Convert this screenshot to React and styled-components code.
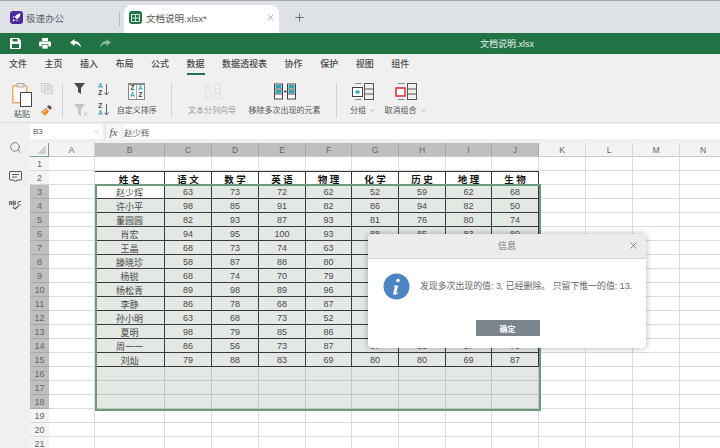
import React from 'react';
import styled, { createGlobalStyle } from 'styled-components';
import { Plus, X, Search, ChevronDown } from 'lucide-react';

const GlobalStyle = createGlobalStyle`
    html, body {
        margin: 0;
        padding: 0;
        background: #fff;
    }
    body {
        font-family: "Liberation Sans", "Noto Sans CJK SC", sans-serif;
    }
`;

const COLUMNS = [
    ['A', 46], ['B', 70], ['C', 47], ['D', 47], ['E', 47], ['F', 46], ['G', 47],
    ['H', 47], ['I', 46], ['J', 47], ['K', 47], ['L', 47], ['M', 47], ['N', 47],
];

const HEADERS = ['姓 名', '语 文', '数 学', '英 语', '物 理', '化 学', '历 史', '地 理', '生 物'];

// rows 7-13 are cut short: the rest of them sits behind the dialog
const STUDENTS = [
    ['赵少辉', 63, 73, 72, 62, 52, 59, 62, 68],
    ['许小平', 98, 85, 91, 82, 86, 94, 82, 50],
    ['董圆圆', 82, 93, 87, 93, 81, 76, 80, 74],
    ['肖宏', 94, 95, 100, 93, 88, 85, 83, 89],
    ['王晶', 68, 73, 74, 63],
    ['滕晓珍', 58, 87, 88, 80],
    ['杨锐', 68, 74, 70, 79],
    ['杨松青', 89, 98, 89, 96],
    ['李静', 86, 78, 68, 87],
    ['孙小明', 63, 68, 73, 52],
    ['夏明', 98, 79, 85, 86],
    ['周一一', 86, 56, 73, 87, 87, 83, 87, 70],
    ['刘灿', 79, 88, 83, 69, 80, 80, 69, 87],
];

const MENU = ['文件', '主页', '插入', '布局', '公式', '数据', '数据透视表', '协作', '保护', '视图', '组件'];

export default function App() {
    return <>
        <GlobalStyle />
        <Page>
            <TabStrip>
                <HomeTab>
                    <AppBadge color='#4b2a9e'><RocketIcon /></AppBadge>
                    极速办公
                </HomeTab>
                <TabDivider />
                <DocTab>
                    <AppBadge color='#217346'><SheetIcon /></AppBadge>
                    <DocName>文档说明.xlsx*</DocName>
                    <X size={9} color='#777' strokeWidth={1.6} />
                </DocTab>
                <NewTab><Plus size={13} color='#555' strokeWidth={1.5} /></NewTab>
            </TabStrip>

            <TitleBar>
                <QuickIcon><SaveIcon /></QuickIcon>
                <QuickIcon><PrintIcon /></QuickIcon>
                <QuickIcon><UndoIcon /></QuickIcon>
                <QuickIcon><RedoIcon /></QuickIcon>
                <DocTitle>文档说明.xlsx</DocTitle>
            </TitleBar>

            <MenuBar>
                {MENU.map(item => <MenuItem key={item} $active={item === '数据'}>{item}</MenuItem>)}
            </MenuBar>

            <Ribbon>
                <ClipboardGroup>
                    <PasteButton>
                        <PasteIcon />
                        <span>粘贴</span>
                    </PasteButton>
                    <SmallStack>
                        <CopyIcon />
                        <BrushIcon />
                    </SmallStack>
                </ClipboardGroup>
                <RibbonDivider />
                <SortGroup>
                    <SmallStack>
                        <FilterIcon />
                        <ClearFilterIcon />
                    </SmallStack>
                    <SmallStack>
                        <SortIcon top='A' bottom='Z' />
                        <SortIcon top='Z' bottom='A' />
                    </SmallStack>
                    <CustomSortButton>
                        <CustomSortIcon />
                        <Label>自定义排序</Label>
                    </CustomSortButton>
                </SortGroup>
                <RibbonDivider />
                <DataGroup>
                    <RibbonButton $width={50} $disabled>
                        <SplitIcon />
                        <Label>文本分列向导</Label>
                    </RibbonButton>
                    <RibbonButton $width={74}>
                        <RemoveDupIcon />
                        <Label>移除多次出现的元素</Label>
                    </RibbonButton>
                </DataGroup>
                <RibbonDivider />
                <OutlineGroup>
                    <RibbonButton $width={22}>
                        <GroupIcon color='#2aa6b8' />
                        <Label>分组<ChevronDown size={7} color='#888' /></Label>
                    </RibbonButton>
                    <RibbonButton $width={41}>
                        <GroupIcon color='#e8262a' hollow />
                        <Label>取消组合<ChevronDown size={7} color='#888' /></Label>
                    </RibbonButton>
                </OutlineGroup>
            </Ribbon>

            <Workspace>
                <SideRail>
                    <Search size={13} color='#666' strokeWidth={1.4} />
                    <CommentIcon />
                    <SpellIcon />
                </SideRail>
                <SheetArea>
                    <FormulaBar>
                        <NameBox>B3<ChevronDown size={7} color='#999' /></NameBox>
                        <FxBox>fx</FxBox>
                        <FormulaInput>赵少辉</FormulaInput>
                    </FormulaBar>
                    <Sheet />
                    <Dialog>
                        <DialogHead>
                            信息
                            <DialogClose><X size={11} color='#666' strokeWidth={1.6} /></DialogClose>
                        </DialogHead>
                        <DialogBody>
                            <InfoIcon />
                            <DialogText>发现多次出现的值: 3, 已经删除。 只留下惟一的值: 13.</DialogText>
                        </DialogBody>
                        <DialogFoot>
                            <OkButton>确定</OkButton>
                        </DialogFoot>
                    </Dialog>
                </SheetArea>
            </Workspace>
        </Page>
    </>
}

function Sheet() {
    const rows = Array.from({ length: 21 }, (_, i) => i + 1);
    return <Grid>
        <Corner><CornerMark /></Corner>
        {COLUMNS.map(([name]) => <ColHead key={name} $on={name >= 'B' && name <= 'J'}>{name}</ColHead>)}
        {rows.map(row => <SheetRow key={row} row={row} />)}
        <Selection />
    </Grid>
}

function SheetRow({ row }) {
    const selected = row >= 3 && row <= 18;
    return <>
        <RowHead $on={selected}>{row}</RowHead>
        {COLUMNS.map(([name], col) => {
            const inTable = col >= 1 && col <= 9;
            let text = '';
            if (row === 2 && inTable) text = HEADERS[col - 1];
            if (row >= 3 && row <= 15 && inTable) text = STUDENTS[row - 3][col - 1] ?? '';
            return <Cell
                key={name}
                $head={row === 2 && inTable}
                $ruled={row >= 2 && row <= 15 && inTable}
                $sel={selected && inTable && !(row === 3 && col === 1)}
            >{text}</Cell>;
        })}
    </>
}

/* icons */

function RocketIcon() {
    return <svg width='9' height='9' viewBox='0 0 10 10'>
        <path d='M9.5.5C6.5.7 4.3 2.3 3 4.5L5.5 7C7.7 5.7 9.3 3.5 9.5.5Z' fill='#fff' />
        <path d='M2.6 3.4 .5 4.5l1.7.8zM6.6 7.4 5.5 9.5l-.8-1.7zM1.8 6.3.5 9.5l3.2-1.3z' fill='#fff' />
    </svg>
}

function SheetIcon() {
    return <svg width='9' height='8' viewBox='0 0 9 8' fill='none' stroke='#fff' strokeWidth='.8'>
        <rect x='.5' y='.5' width='8' height='7' />
        <path d='M.5 4h8M4.5.5v7' />
    </svg>
}

function SaveIcon() {
    return <svg width='11' height='11' viewBox='0 0 11 11'>
        <path d='M0 1a1 1 0 0 1 1-1h7.5L11 2.5V10a1 1 0 0 1-1 1H1a1 1 0 0 1-1-1Z' fill='#fff' />
        <rect x='2.5' y='1' width='5' height='2.5' fill='#217346' />
        <rect x='2' y='6' width='7' height='4' fill='#217346' />
    </svg>
}

function PrintIcon() {
    return <svg width='12' height='11' viewBox='0 0 12 11'>
        <rect x='3' y='0' width='6' height='3' fill='#fff' />
        <rect x='0' y='3.5' width='12' height='5' rx='1' fill='#fff' />
        <rect x='3' y='6.5' width='6' height='4.5' fill='#fff' stroke='#217346' strokeWidth='.7' />
    </svg>
}

function UndoIcon() {
    return <svg width='11' height='9' viewBox='0 0 11 9'>
        <path d='M4.5 0 0 3.5 4.5 7V4.7C7 4.7 9 5.7 11 8.5 10.5 4.5 8 2.3 4.5 2.1Z' fill='#fff' />
    </svg>
}

function RedoIcon() {
    return <svg width='11' height='9' viewBox='0 0 11 9'>
        <path d='M6.5 0 11 3.5 6.5 7V4.7C4 4.7 2 5.7 0 8.5.5 4.5 3 2.3 6.5 2.1Z' fill='#8fb8a1' />
    </svg>
}

function PasteIcon() {
    return <svg width='20' height='24' viewBox='0 0 20 24'>
        <rect x='.75' y='2.75' width='14' height='17' rx='1' fill='#fff' stroke='#f4a860' strokeWidth='1.5' />
        <rect x='5' y='.5' width='7' height='3.5' fill='#e8e8e8' stroke='#999' strokeWidth='.8' />
        <rect x='8.5' y='9.5' width='11' height='14' fill='#fff' stroke='#444' />
    </svg>
}

function CopyIcon() {
    return <svg width='12' height='11' viewBox='0 0 12 11' fill='none' stroke='#cfcfcf'>
        <rect x='.5' y='.5' width='8' height='8' fill='#eee' />
        <rect x='3.5' y='2.5' width='8' height='8' fill='#e6e6e6' />
        <path d='M5 5h5M5 7h5' strokeWidth='.8' />
    </svg>
}

function BrushIcon() {
    return <svg width='11' height='11' viewBox='0 0 11 11'>
        <path d='M0 7 5 3l3 3.5-4 4.2Z' fill='#ee8a28' />
        <path d='M6 2 8 0l3 2.5-2 2.5Z' fill='#555' />
        <path d='M2 7.5 5 5' stroke='#fff' strokeWidth='.8' />
    </svg>
}

function FilterIcon() {
    return <svg width='12' height='11' viewBox='0 0 12 11'>
        <path d='M0 0h11L7 5v6L4 9V5Z' fill='#4a4a4a' />
    </svg>
}

function ClearFilterIcon() {
    return <svg width='14' height='12' viewBox='0 0 14 12'>
        <path d='M0 0h11L7 5v7L4 10V5Z' fill='#c4c4c4' />
        <path d='M10 8.5l3 3M13 8.5l-3 3' stroke='#bbb' strokeWidth='.8' />
    </svg>
}

function SortIcon({ top, bottom }) {
    const tint = letter => letter === 'A' ? '#38a6c6' : '#444';
    return <SortGlyph>
        <SortLetters>
            <SortLetter color={tint(top)}>{top}</SortLetter>
            <SortLetter color={tint(bottom)}>{bottom}</SortLetter>
        </SortLetters>
        <svg width='5' height='12' viewBox='0 0 5 12' fill='none' stroke='#666'>
            <path d='M2.5 0v11M.5 8.5l2 2.5 2-2.5' />
        </svg>
    </SortGlyph>
}

function CustomSortIcon() {
    return <CustomSortBox>
        <SortCol><SortLetter color='#444'>Z</SortLetter><SortLetter color='#38a6c6'>A</SortLetter></SortCol>
        <SortCol><SortLetter color='#38a6c6'>A</SortLetter><SortLetter color='#444'>Z</SortLetter></SortCol>
    </CustomSortBox>
}

function SplitIcon() {
    return <svg width='18' height='17' viewBox='0 0 19 17' fill='none'>
        <path d='M1 2h8M1 5h8M1 8h8' stroke='#d0d0d0' />
        <rect x='12.5' y='.5' width='6' height='15' stroke='#d0d0d0' />
        <path d='M12.5 5.5h6M12.5 10.5h6' stroke='#d0d0d0' />
        <path d='M9 11.5a3.5 3.5 0 1 1-6-1' stroke='#b5dde8' strokeWidth='1.2' />
    </svg>
}

function RemoveDupIcon() {
    const column = x => <>
        <rect x={x} y='.5' width='8' height='15' fill='#fff' stroke='#444' />
        <rect x={x + 1} y='1.5' width='6' height='3' fill='#2aa6b8' />
        <rect x={x + 1} y='6.5' width='6' height='3' fill='#2aa6b8' />
        <path d={`M${x} 5.5h8M${x} 10.5h8`} stroke='#444' />
    </>;
    return <svg width='22' height='17' viewBox='0 0 22 16'>
        {column(.5)}
        <path d='M10 8h2.5M11.2 6.7v2.6' stroke='#444' />
        {column(13.5)}
    </svg>
}

function GroupIcon({ color, hollow }) {
    return <svg width='22' height='17' viewBox='0 0 22 17' fill='none'>
        <rect x='12.5' y='.5' width='9' height='16' stroke='#555' strokeWidth='1' />
        <path d='M12.5 6h9M12.5 11h9' stroke='#555' />
        <path d='M3 .5h6.5M3 16.5h6.5' stroke='#888' />
        {hollow
            ? <rect x='1' y='5' width='9' height='8' fill='#fff' stroke={color} strokeWidth='1.5' />
            : <>
                <rect x='.5' y='4.5' width='10' height='9' fill='#fff' stroke='#444' />
                <rect x='3.5' y='7.5' width='4' height='3' fill={color} />
            </>}
    </svg>
}

function CommentIcon() {
    return <svg width='13' height='12' viewBox='0 0 13 12' fill='none' stroke='#555'>
        <path d='M1 .5h11a.5.5 0 0 1 .5.5v7.5a.5.5 0 0 1-.5.5H8L6.5 11 5 9H1a.5.5 0 0 1-.5-.5V1A.5.5 0 0 1 1 .5Z' />
        <path d='M3 3.5h7M3 6h5' strokeWidth='.9' />
    </svg>
}

function SpellIcon() {
    return <svg width='13' height='10' viewBox='0 0 13 10' fill='none' stroke='#555' strokeWidth='.9'>
        <path d='M.5 5V1.500h2V5M.5 3.200h2M4 5V1h1.500a1 1 0 0 1 0 2H4h1.700a1 1 0 0 1 0 2ZM12 1.500H10a1 1 0 0 0-1 1V4a1 1 0 0 0 1 1h2' />
        <path d='M4 7l2 2 3.500-3' strokeWidth='1.100' />
    </svg>
}

function CornerMark() {
    return <svg width='9' height='9' viewBox='0 0 9 9'>
        <path d='M9 0v9H0Z' fill='#cfcfcf' />
    </svg>
}

function InfoIcon() {
    return <svg width='27' height='27' viewBox='0 0 27 27'>
        <circle cx='13.5' cy='13.5' r='13' fill='#4a84c2' />
        <circle cx='15' cy='7.5' r='1.8' fill='#fff' />
        <path d='M11 12.5h4.3l-2 7.2c-.1.5.4.6 1.700-.4l.3.5c-1.500 1.600-2.700 2-3.800 2-1.200 0-1.400-.8-1.200-1.700l1.500-6.300-1.100-.5Z' fill='#fff' />
    </svg>
}

/* page */

const Page = styled.div`
    position: relative;
    width: 720px;
    height: 448px;
    overflow: hidden;
    display: flex;
    flex-direction: column;
    font-family: "Liberation Sans", "Noto Sans CJK SC", sans-serif;
    color: #444;
    background: #f0f0f0;
`;

const TabStrip = styled.div`
    display: flex;
    align-items: flex-end;
    height: 32px;
    padding-left: 10px;
    border-top: 1px solid #a4a6a8;
    background: #dee1e6;
    flex: none;
`;

const AppBadge = styled.span`
    display: inline-flex;
    align-items: center;
    justify-content: center;
    width: 13px;
    height: 13px;
    border-radius: 3px;
    background: ${props => props.color};
    flex: none;
`;

const HomeTab = styled.div`
    display: flex;
    align-items: center;
    gap: 3px;
    width: 109px;
    height: 28px;
    padding-bottom: 3px;
    box-sizing: border-box;
    font-size: 9.5px;
    color: #5d5f63;
`;

const TabDivider = styled.div`
    width: 1px;
    height: 15px;
    margin-bottom: 7px;
    background: #b9bcc1;
`;

const DocTab = styled.div`
    display: flex;
    align-items: center;
    gap: 4px;
    width: 155px;
    height: 28px;
    margin-left: 4px;
    padding: 0 4px 3px 5px;
    box-sizing: border-box;
    border-radius: 8px 8px 0 0;
    background: #fff;
`;

const DocName = styled.span`
    flex: 1;
    font-size: 9.5px;
    color: #555;
`;

const NewTab = styled.div`
    display: flex;
    align-items: center;
    justify-content: center;
    width: 41px;
    height: 28px;
    padding-bottom: 3px;
    box-sizing: border-box;
`;

const TitleBar = styled.div`
    display: flex;
    align-items: center;
    height: 21px;
    background: #217346;
    flex: none;
`;

const QuickIcon = styled.span`
    display: flex;
    align-items: center;
    justify-content: center;
    width: 30px;
    svg { display: block; }
`;

const DocTitle = styled.span`
    margin-left: 360px;
    font-size: 9px;
    color: #e6f0ea;
`;

const MenuBar = styled.div`
    display: flex;
    align-items: flex-start;
    gap: 17.5px;
    height: 24px;
    padding-left: 9px;
    flex: none;
`;

const MenuItem = styled.div`
    display: flex;
    align-items: center;
    height: 21px;
    box-sizing: border-box;
    font-size: 9px;
    font-weight: 500;
    color: #4a4a4a;
    border-bottom: 2px solid ${props => props.$active ? '#217346' : 'transparent'};
`;

const Ribbon = styled.div`
    display: flex;
    align-items: flex-start;
    height: 45px;
    padding-top: 5px;
    box-sizing: border-box;
    border-bottom: 1px solid #dedede;
    flex: none;
`;

const RibbonDivider = styled.div`
    width: 1px;
    height: 35px;
    background: #d2d2d2;
    flex: none;
`;

const ClipboardGroup = styled.div`
    display: flex;
    width: 62px;
    padding-left: 12px;
    gap: 9px;
    box-sizing: border-box;
`;

const PasteButton = styled.div`
    display: flex;
    flex-direction: column;
    align-items: center;
    gap: 1px;
    font-size: 8px;
    color: #555;
`;

const SmallStack = styled.div`
    display: flex;
    flex-direction: column;
    align-items: flex-start;
    justify-content: space-between;
    height: 33px;
`;

const SortGroup = styled.div`
    display: flex;
    width: 108px;
    padding-left: 11px;
    gap: 10px;
    box-sizing: border-box;
`;

const RibbonButton = styled.div`
    display: flex;
    flex-direction: column;
    align-items: center;
    gap: 5px;
    width: ${props => props.$width}px;
    opacity: ${props => props.$disabled ? 0.55 : 1};
    flex: none;
`;

const CustomSortButton = styled(RibbonButton)`
    width: 42px;
    margin-left: -3px;
`;

const Label = styled.div`
    display: flex;
    align-items: center;
    gap: 3px;
    height: 11px;
    font-size: 8px;
    line-height: 11px;
    white-space: nowrap;
    color: #555;
`;

const DataGroup = styled.div`
    display: flex;
    width: 164px;
    padding-left: 15px;
    gap: 10.5px;
    box-sizing: border-box;
`;

const OutlineGroup = styled.div`
    display: flex;
    padding-left: 15px;
    gap: 11px;
`;

const SortGlyph = styled.div`
    display: flex;
    align-items: center;
    gap: 1px;
`;

const SortLetters = styled.div`
    display: flex;
    flex-direction: column;
`;

const SortLetter = styled.span`
    font-size: 6.5px;
    line-height: 6.5px;
    font-weight: 700;
    text-align: center;
    color: ${props => props.color};
`;

const CustomSortBox = styled.div`
    display: grid;
    grid-template-columns: 1fr 1fr;
    width: 17px;
    height: 17px;
    box-sizing: border-box;
    border: 1px solid #888;
    border-top-width: 2px;
    background: #fff;
`;

const SortCol = styled.div`
    display: flex;
    flex-direction: column;
    justify-content: space-around;
    &:first-child { border-right: 1px solid #aaa; }
`;

const Workspace = styled.div`
    flex: 1;
    display: flex;
    min-height: 0;
`;

const SideRail = styled.div`
    display: flex;
    flex-direction: column;
    align-items: center;
    gap: 17px;
    width: 30px;
    padding-top: 18px;
    box-sizing: border-box;
    flex: none;
`;

const SheetArea = styled.div`
    position: relative;
    flex: 1;
    min-width: 0;
    display: flex;
    flex-direction: column;
    overflow: hidden;
`;

const FormulaBar = styled.div`
    display: flex;
    gap: 2px;
    height: 15px;
    margin: 1px 0 4px;
    flex: none;
`;

const NameBox = styled.div`
    display: flex;
    align-items: center;
    justify-content: space-between;
    width: 73px;
    padding: 0 3px;
    box-sizing: border-box;
    font-size: 8px;
    color: #555;
    background: #fff;
`;

const FxBox = styled.div`
    display: flex;
    align-items: center;
    justify-content: center;
    width: 15px;
    font: italic 11px "Liberation Serif", serif;
    color: #555;
    background: #f7f7f7;
    border-left: 1px solid #ddd;
`;

const FormulaInput = styled.div`
    flex: 1;
    display: flex;
    align-items: center;
    padding-left: 1px;
    font-size: 8.5px;
    color: #666;
    background: #fff;
`;

const Grid = styled.div`
    position: relative;
    display: grid;
    grid-template-columns: 19px ${COLUMNS.map(([, width]) => `${width}px`).join(' ')};
    grid-template-rows: repeat(22, 14px);
    background: #fff;
    flex: none;
`;

const Corner = styled.div`
    display: flex;
    align-items: flex-end;
    justify-content: flex-end;
    padding: 0 2px 2px 0;
    box-sizing: border-box;
    background: #f3f3f3;
    border-right: 1px solid #7c9f88;
    border-bottom: 1px solid #7c9f88;
`;

const ColHead = styled.div`
    display: flex;
    align-items: center;
    justify-content: center;
    font-size: 8.5px;
    color: #666;
    box-sizing: border-box;
    background: ${props => props.$on ? '#bfbfbf' : '#f3f3f3'};
    border-right: 1px solid ${props => props.$on ? '#a8a8a8' : '#d8d8d8'};
    border-bottom: 1px solid #c8c8c8;
`;

const RowHead = styled.div`
    display: flex;
    align-items: center;
    justify-content: center;
    padding-top: 1px;
    font-size: 9px;
    color: #666;
    box-sizing: border-box;
    background: ${props => props.$on ? '#bfbfbf' : '#f3f3f3'};
    border-bottom: 1px solid ${props => props.$on ? '#a8a8a8' : '#d8d8d8'};
`;

const Cell = styled.div`
    display: flex;
    align-items: center;
    justify-content: center;
    padding-top: 1px;
    box-sizing: border-box;
    font-size: ${props => props.$head ? 9.5 : 9}px;
    font-weight: ${props => props.$head ? 700 : 400};
    color: ${props => props.$head ? '#111' : '#4a4a4a'};
    white-space: pre;
    background: ${props => props.$sel ? '#e3e8e4' : '#fff'};
    border-right: 1px solid ${props => props.$ruled ? '#3a3a3a' : props.$sel ? '#c4c8c5' : '#dcdcdc'};
    border-bottom: 1px solid ${props => props.$ruled ? '#3a3a3a' : props.$sel ? '#c4c8c5' : '#dcdcdc'};
    ${props => props.$head ? 'border-top: 1px solid #3a3a3a;' : ''}
`;

const Selection = styled.div`
    position: absolute;
    left: 65px;
    top: 41px;
    width: 446px;
    height: 227px;
    box-sizing: border-box;
    border: 2px solid #6c9a7e;
    pointer-events: none;
`;

const Dialog = styled.div`
    position: absolute;
    left: 338px;
    top: 111px;
    width: 278px;
    height: 114px;
    display: flex;
    flex-direction: column;
    border-radius: 4px;
    overflow: hidden;
    background: #fff;
    box-shadow: 0 0 6px rgba(0, 0, 0, 0.3);
`;

const DialogHead = styled.div`
    position: relative;
    display: flex;
    align-items: center;
    justify-content: center;
    height: 25px;
    padding-bottom: 1px;
    box-sizing: border-box;
    font-size: 9px;
    color: #777;
    background: #ececec;
    border-bottom: 1px solid #d6d6d6;
    flex: none;
`;

const DialogClose = styled.span`
    position: absolute;
    right: 7px;
    top: 6px;
    display: flex;
`;

const DialogBody = styled.div`
    display: flex;
    align-items: center;
    gap: 10px;
    height: 55px;
    padding-left: 15px;
    font-size: 8.9px;
    color: #666;
    white-space: nowrap;
    flex: none;
`;

const DialogText = styled.span`
    margin-bottom: 2px;
`;

const DialogFoot = styled.div`
    display: flex;
    justify-content: center;
    padding-top: 6px;
`;

const OkButton = styled.div`
    display: flex;
    align-items: center;
    justify-content: center;
    width: 64px;
    height: 16px;
    margin-left: 1px;
    font-size: 8px;
    font-weight: 700;
    color: #fff;
    background: #7d858c;
`;
